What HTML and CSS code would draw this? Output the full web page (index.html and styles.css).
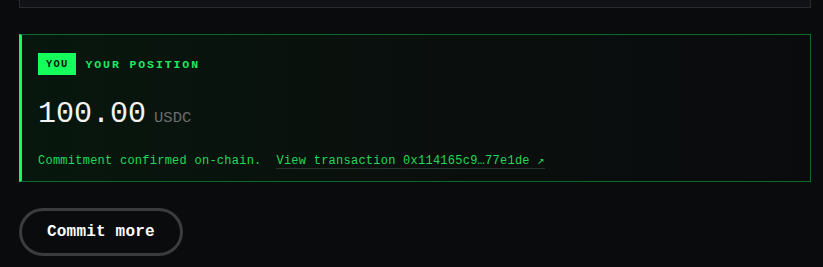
FILE: index.html
```html
<!DOCTYPE html>
<html lang="en">
<head>
<meta charset="utf-8">
<title>Your position</title>
<link rel="stylesheet" href="styles.css">
</head>
<body>
<div class="page">
  <div class="prev-card"></div>
  <section class="position-card">
    <div class="pos-header">
      <span class="badge">YOU</span>
      <span class="pos-title">YOUR POSITION</span>
    </div>
    <div class="amount-row">
      <span class="amount">100.00</span>
      <span class="unit">USDC</span>
    </div>
    <p class="status">Commitment confirmed on-chain.  <a class="tx-link" href="#">View transaction 0x114165c9…77e1de ↗</a></p>
  </section>
  <div class="actions">
    <button class="btn-outline" type="button">Commit more</button>
  </div>
</div>
</body>
</html>
```

FILE: styles.css
```css
html, body {
  margin: 0;
  padding: 0;
  background: #0a0b0d;
  font-family: "Liberation Mono", "DejaVu Sans Mono", monospace;
  color: #ffffff;
}

.page {
  display: flex;
  flex-direction: column;
  gap: 26px;
  padding: 0 12px 0 19px;
}

.prev-card {
  height: 7px;
  background: #111215;
  border: 1px solid #2a2b2e;
  border-top: none;
}

.position-card {
  display: flex;
  flex-direction: column;
  border: 1px solid #0b6a27;
  border-left: 3px solid #14ff5c;
  background: linear-gradient(90deg, #07170d 0%, #0a100d 45%, #0a0b0d 100%);
  padding: 18px 16px 12px 16px;
}

.pos-header {
  display: flex;
  align-items: center;
  gap: 10px;
  height: 22px;
}

.badge {
  display: inline-flex;
  align-items: center;
  height: 22px;
  padding: 0 7px 0 8px;
  background: #14ff5c;
  color: #04140a;
  font-size: 10.5px;
  font-weight: 700;
  letter-spacing: 1.2px;
}

.pos-title {
  color: #1ee860;
  font-size: 11.5px;
  font-weight: 700;
  letter-spacing: 1.9px;
}

.amount-row {
  display: flex;
  align-items: baseline;
  gap: 8px;
  margin-top: 21px;
  line-height: 36px;
}

.amount {
  font-size: 30px;
  color: #f4f4f4;
}

.unit {
  font-size: 15.5px;
  color: #6b6d6e;
}

.status {
  margin: 17px 0 0;
  font-size: 12px;
  line-height: 16px;
  letter-spacing: 0.25px;
  color: #22d85a;
  white-space: pre;
}

.tx-link {
  color: #22d85a;
  text-decoration: none;
  border-bottom: 1px solid #26342b;
}

.actions {
  display: flex;
}

.btn-outline {
  height: 48px;
  padding: 0 25px;
  border: 3px solid #3b3c3d;
  border-radius: 24px;
  background: transparent;
  color: #ffffff;
  font-family: "Liberation Mono", "DejaVu Sans Mono", monospace;
  font-size: 16px;
  font-weight: 700;
  letter-spacing: 0.2px;
  cursor: pointer;
}
```
